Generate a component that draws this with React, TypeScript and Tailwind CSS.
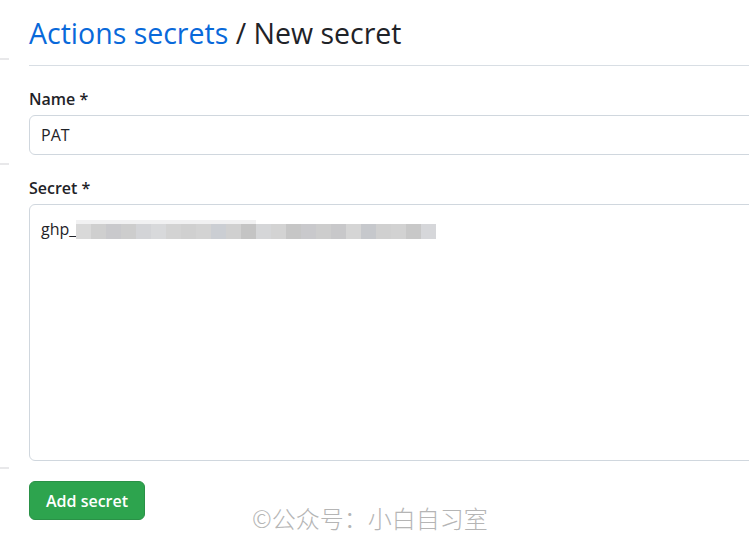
import React from "react";

const blurBlocks = [
  "#d9d9d9", "#cfcfcf", "#c9c9cc", "#cdcdcd", "#d3d4d7", "#d8d9db", "#d3d3d3", "#d0d0d0",
  "#d3d3d3", "#cbced3", "#d0d0d0", "#c4c4c4", "#d5d6d8", "#d3d3d3", "#c6c6c6", "#c9c9cc",
  "#cdcdcd", "#c8c8ca", "#d5d5d5", "#c6c8cc", "#d0d0d0", "#d2d2d2", "#c8c8c8", "#d6d7da",
];

export default function App() {
  return (
    <div
      className="w-[749px] h-[539px] overflow-hidden bg-white flex"
      style={{ fontFamily: '"Open Sans", "Noto Sans", sans-serif' }}
    >
      {/* sidebar edge */}
      <div className="w-[9px] shrink-0 flex flex-col">
        <div className="h-[58px]" />
        <div className="h-[2px] bg-[#e8e8ea]" />
        <div className="h-[103px]" />
        <div className="h-[2px] bg-[#e8e8ea]" />
        <div className="h-[302px]" />
        <div className="h-[2px] bg-[#e8e8ea]" />
      </div>

      <div className="ml-[20px] flex-1 flex flex-col min-w-[760px]">
        <div className="pt-[14px] pb-[13px] border-b border-[#d8dee4]">
          <h2 className="text-[28.5px] leading-[38px] text-[#1f2328]">
            <span className="text-[#0969da]">Actions secrets</span> / New secret
          </h2>
        </div>

        <label className="mt-[22px] text-[16px] leading-[22px] font-semibold text-[#1f2328]">Name *</label>
        <div className="mt-[5px] h-[40px] rounded-[6px] border border-[#d0d7de] flex items-center px-[11px] text-[16px] text-[#1f2328]">
          PAT
        </div>

        <label className="mt-[22px] text-[16px] leading-[22px] font-semibold text-[#1f2328]">Secret *</label>
        <div className="mt-[5px] h-[257px] rounded-[6px] border border-[#d0d7de] px-[11px] pt-[14px] text-[16px] text-[#1f2328]">
          <div className="flex items-end h-[20px]">
            <span className="leading-[20px]">ghp_</span>
            <div className="flex flex-col">
              <div className="h-[4px] w-[180px] bg-[#f1f1f2]" />
              <div className="flex h-[15px]">
                {blurBlocks.map((c, i) => (
                  <div key={i} className="w-[15px] h-full" style={{ backgroundColor: c }} />
                ))}
              </div>
            </div>
          </div>
        </div>

        <div className="mt-[20px] flex items-start">
          <button className="h-[39px] w-[116px] rounded-[6px] bg-[#2da44e] border border-[#2a9147] text-white text-[16px] font-semibold">
            Add secret
          </button>
          <span
            className="ml-[107px] mt-[23px] text-[24px] leading-[28px] text-[#b5b5b5] font-light"
            style={{ fontFamily: '"Noto Sans CJK SC", sans-serif' }}
          >
            ©公众号：小白自习室
          </span>
        </div>
      </div>
    </div>
  );
}
